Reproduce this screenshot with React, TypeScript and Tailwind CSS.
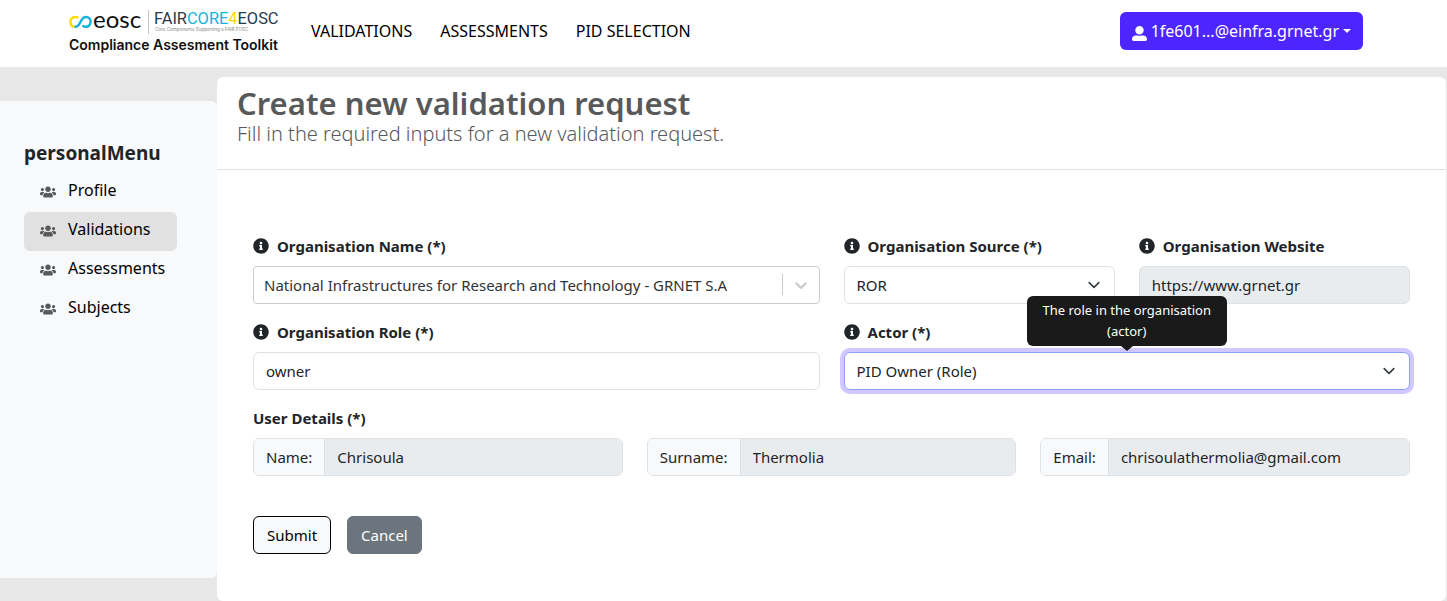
import type { ReactNode } from "react";
import { FaInfoCircle, FaUserAlt, FaUsers } from "react-icons/fa";

const navLinks = ["VALIDATIONS", "ASSESSMENTS", "PID SELECTION"];
const menuItems = ["Profile", "Validations", "Assessments", "Subjects"];

const control =
  "block h-[38px] w-full appearance-none rounded-md border border-[#dee2e6] px-3 text-[#212529] outline-none";

function Logo() {
  return (
    <svg
      width="216"
      height="56"
      viewBox="0 -10 216 56"
      role="img"
      aria-label="EOSC FAIRCORE4EOSC Compliance Assesment Toolkit"
    >
      <g fill="none" strokeWidth="2.4" strokeLinecap="round">
        <path d="M8.6 7.4C7.9 7.1 7.1 7 6.2 7C3.4 7 1.4 9.2 1.4 11.8C1.4 14.6 3.2 16.6 5.4 16.8" stroke="#fcd900" />
        <path
          d="M6.6 16.8C12.4 16.4 10.6 7 17 7C19.8 7 21.6 9.2 21.6 11.8C21.6 14.6 19.6 16.8 17 16.8C15.9 16.8 15 16.6 14.2 16.1"
          stroke="#0fb5dc"
        />
      </g>
      <text x="24" y="18" fontFamily="Lato, sans-serif" fontSize="24" fill="#111111">eosc</text>
      <path d="M79.5 0V24" stroke="#c4c4c4" />
      <text x="85" y="14" fontFamily="Roboto, sans-serif" fontSize="16.4" fill="#2b3a4a">
        FAIR<tspan fill="#0fb5dc">CORE</tspan><tspan fill="#fcd900">4</tspan>EOSC
      </text>
      <text x="86" y="21" fontFamily="Inter, sans-serif" fontSize="4.6" fill="#8a8a8a">
        Core Components Supporting a FAIR EOSC
      </text>
      <text x="0" y="40" fontFamily="Inter, sans-serif" fontSize="14" fontWeight="600" fill="#111111">
        Compliance Assesment Toolkit
      </text>
    </svg>
  );
}

function Chevron() {
  return (
    <svg
      viewBox="0 0 16 16"
      className="pointer-events-none absolute top-[11px] right-[13px] size-4"
      fill="none"
      stroke="#343a40"
      strokeWidth="1.6"
      strokeLinecap="round"
      strokeLinejoin="round"
      aria-hidden="true"
    >
      <path d="m3.2 5.6 4.8 4.8 4.8-4.8" />
    </svg>
  );
}

function Field({
  id,
  label,
  wide,
  children,
}: {
  id: string;
  label: string;
  wide?: boolean;
  children: ReactNode;
}) {
  return (
    <div className={wide ? "col-span-2" : ""}>
      <label htmlFor={id} className="mb-2 flex h-6 items-center gap-2 font-bold">
        <FaInfoCircle className="size-4" aria-hidden="true" />
        {label}
      </label>
      <div className="relative">{children}</div>
    </div>
  );
}

function Detail({ id, label, value }: { id: string; label: string; value: string }) {
  return (
    <div className="flex h-[38px] overflow-hidden rounded-md border border-[#dee2e6]">
      <label htmlFor={id} className="flex items-center border-r border-[#dee2e6] bg-[#f8f9fa] px-3">
        {label}
      </label>
      <input
        id={id}
        defaultValue={value}
        disabled
        className="min-w-0 flex-1 bg-[#e9ecef] px-3 text-[#212529] outline-none"
      />
    </div>
  );
}

export default function App() {
  return (
    <div className="bg-[#e7e7e7] font-['Noto_Sans',sans-serif] text-[15px] leading-6 text-[#212529]">
      <header className="flex h-[67px] items-start bg-white pr-[84px] pl-[69px]">
        <a href="#">
          <Logo />
        </a>
        <nav className="mt-[19px] ml-[26px] flex gap-7 text-base text-black">
          {navLinks.map((name) => (
            <a key={name} href="#">
              {name}
            </a>
          ))}
        </nav>
        <button
          type="button"
          className="mt-3 ml-auto flex h-[38px] items-center gap-1 rounded-md bg-[#4c25ff] px-3 text-base text-white"
        >
          <FaUserAlt className="mt-1 size-[15px]" aria-hidden="true" />
          1fe601...@einfra.grnet.gr
          <span className="border-x-4 border-t-4 border-x-transparent border-t-white" />
        </button>
      </header>

      <div className="flex pt-[10px]">
        <aside className="mt-6 mb-[23px] w-[217px] shrink-0 rounded-r-md bg-[#f8f9fb] pt-10 pr-10 pl-6">
          <h2 className="mb-2 text-[19px] font-bold">personalMenu</h2>
          <ul>
            {menuItems.map((name) => (
              <li key={name}>
                <a
                  href="#"
                  className={
                    name === "Validations"
                      ? "flex h-[39px] items-start gap-3 rounded-md bg-[#e1e1e1] pt-[5px] pl-4 text-base text-black"
                      : "flex h-[39px] items-start gap-3 pt-[5px] pl-4 text-base text-black"
                  }
                >
                  <FaUsers className="mt-[6px] size-4 shrink-0 text-[#58595b]" aria-hidden="true" />
                  {name}
                </a>
              </li>
            ))}
          </ul>
        </aside>

        <main className="mr-px min-w-0 flex-1 rounded-md bg-white">
          <div className="border-b border-[#dee2e6] px-5 pt-[7px] pb-[23px] text-[#58595b]">
            <h1 className="text-[31px] leading-[38px] font-semibold">Create new validation request</h1>
            <p className="text-xl leading-6 font-light">Fill in the required inputs for a new validation request.</p>
          </div>

          <form className="px-9 pt-16 pb-[47px]">
            <div className="grid grid-cols-4 gap-x-6 gap-y-4">
              <Field id="org-name" label="Organisation Name (*)" wide>
                <select
                  id="org-name"
                  className="block h-[38px] w-full appearance-none rounded border border-[#cccccc] bg-white pr-12 pl-[10px] text-[#333333] outline-none"
                >
                  <option>National Infrastructures for Research and Technology - GRNET S.A</option>
                </select>
                <span className="pointer-events-none absolute top-2 right-0 flex h-[21px] w-[38px] items-center justify-center border-l border-[#cccccc]">
                  <svg width="20" height="20" viewBox="0 0 20 20" fill="#cccccc" aria-hidden="true">
                    <path d="M4.516 7.548c0.436-0.446 1.043-0.481 1.576 0l3.908 3.747 3.908-3.747c0.533-0.481 1.141-0.446 1.574 0 0.436 0.445 0.408 1.197 0 1.615-0.406 0.418-4.695 4.502-4.695 4.502-0.217 0.223-0.502 0.335-0.787 0.335s-0.57-0.112-0.789-0.335c0 0-4.287-4.084-4.695-4.502s-0.436-1.17 0-1.615z" />
                  </svg>
                </span>
              </Field>
              <Field id="org-source" label="Organisation Source (*)">
                <select id="org-source" className={`${control} bg-white`}>
                  <option>ROR</option>
                </select>
                <Chevron />
              </Field>
              <Field id="org-website" label="Organisation Website">
                <input
                  id="org-website"
                  defaultValue="https://www.grnet.gr"
                  disabled
                  className={`${control} bg-[#e9ecef]`}
                />
              </Field>
              <Field id="org-role" label="Organisation Role (*)" wide>
                <input id="org-role" defaultValue="owner" className={`${control} bg-white`} />
              </Field>
              <Field id="actor" label="Actor (*)" wide>
                <select
                  id="actor"
                  aria-describedby="actor-tip"
                  className="block h-[38px] w-full appearance-none rounded-md border border-[#8f9fff] bg-white px-3 text-[#212529] ring-4 ring-[#d2c8ff] outline-none"
                >
                  <option>PID Owner (Role)</option>
                </select>
                <Chevron />
                <div
                  id="actor-tip"
                  role="tooltip"
                  className="absolute bottom-full left-1/2 mb-[6px] w-[200px] -translate-x-1/2 rounded-md bg-[#1a1a1a] px-2 py-1 text-center text-[13px] leading-[21px] text-white"
                >
                  The role in the organisation (actor)
                  <span className="absolute top-full left-1/2 -translate-x-1/2 border-x-[6px] border-t-[5px] border-x-transparent border-t-[#1a1a1a]" />
                </div>
              </Field>
            </div>

            <fieldset className="mt-4">
              <legend className="mb-2 font-bold">User Details (*)</legend>
              <div className="grid grid-cols-3 gap-6">
                <Detail id="name" label="Name:" value="Chrisoula" />
                <Detail id="surname" label="Surname:" value="Thermolia" />
                <Detail id="email" label="Email:" value="chrisoulathermolia@gmail.com" />
              </div>
            </fieldset>

            <div className="mt-10 flex gap-4">
              <button
                type="submit"
                className="h-[38px] rounded-md border border-black bg-[#f8f9fa] px-[13px] text-black"
              >
                Submit
              </button>
              <button
                type="button"
                className="h-[38px] rounded-md border border-[#6c757d] bg-[#6c757d] px-[13px] text-white"
              >
                Cancel
              </button>
            </div>
          </form>
        </main>
      </div>
    </div>
  );
}
